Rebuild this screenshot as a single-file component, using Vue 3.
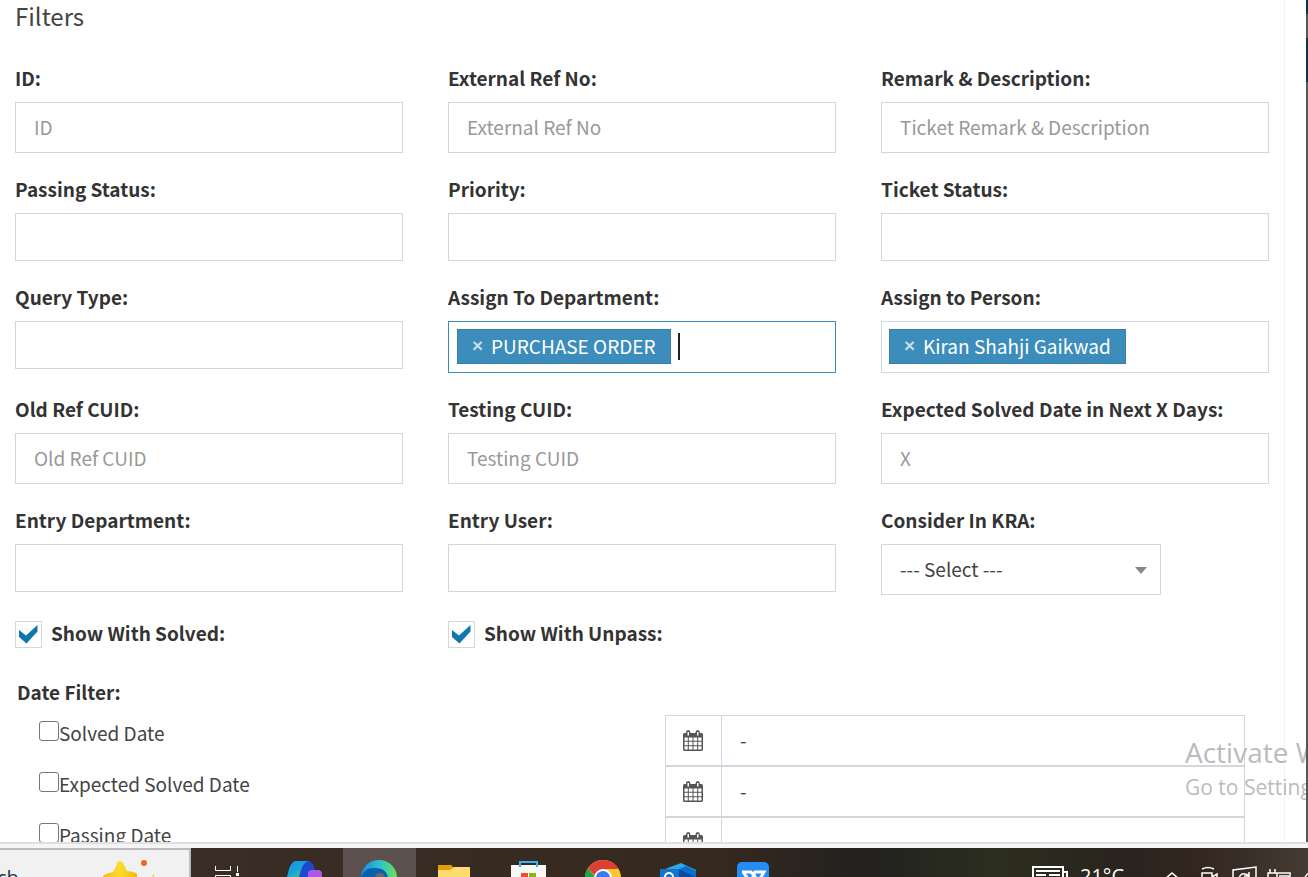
<script setup>
import { ref } from 'vue'

const rows = [
  [
    { id: 'id', label: 'ID:', type: 'text', placeholder: 'ID' },
    { id: 'external', label: 'External Ref No:', type: 'text', placeholder: 'External Ref No' },
    { id: 'remark', label: 'Remark & Description:', type: 'text', placeholder: 'Ticket Remark & Description' }
  ],
  [
    { id: 'passing', label: 'Passing Status:', type: 'tags' },
    { id: 'priority', label: 'Priority:', type: 'tags' },
    { id: 'ticket', label: 'Ticket Status:', type: 'tags' }
  ],
  [
    { id: 'query', label: 'Query Type:', type: 'tags' },
    { id: 'department', label: 'Assign To Department:', type: 'tags', tag: 'PURCHASE ORDER', active: true },
    { id: 'person', label: 'Assign to Person:', type: 'tags', tag: 'Kiran Shahji Gaikwad' }
  ],
  [
    { id: 'oldref', label: 'Old Ref CUID:', type: 'text', placeholder: 'Old Ref CUID' },
    { id: 'testing', label: 'Testing CUID:', type: 'text', placeholder: 'Testing CUID' },
    { id: 'expected', label: 'Expected Solved Date in Next X Days:', type: 'text', placeholder: 'X' }
  ],
  [
    { id: 'entrydept', label: 'Entry Department:', type: 'tags' },
    { id: 'entryuser', label: 'Entry User:', type: 'tags' },
    { id: 'kra', label: 'Consider In KRA:', type: 'select' }
  ]
]

const showSolved = ref(true)
const showUnpass = ref(true)
const dates = ref([
  { id: 'solved-date', label: 'Solved Date', range: '-' },
  { id: 'expected-date', label: 'Expected Solved Date', range: '-' },
  { id: 'passing-date', label: 'Passing Date', range: '-' }
])
</script>

<template>
  <div class="screen">
    <main class="page">
      <form class="filters" @submit.prevent>
        <h1>Filters</h1>
        <div v-for="(row, i) in rows" :key="i" class="row">
          <div v-for="f in row" :key="f.id" class="field">
            <label :for="f.id">{{ f.label }}</label>
            <input v-if="f.type === 'text'" :id="f.id" class="box text" type="text" :placeholder="f.placeholder" />
            <div v-else-if="f.type === 'tags'" class="box tags" :class="{ active: f.active, filled: f.tag }">
              <span v-if="f.tag" class="tag"><button type="button" :aria-label="'Remove ' + f.tag">×</button>{{ f.tag }}</span>
              <i v-if="f.active" class="caret"></i>
              <input :id="f.id" type="text" />
            </div>
            <div v-else class="select">
              <select :id="f.id" class="box text"><option>--- Select ---</option></select>
              <i class="arrow"></i>
            </div>
          </div>
        </div>
        <div class="row checks">
          <label class="check"><input v-model="showSolved" type="checkbox" />
            <svg viewBox="0 0 27 27"><rect x=".5" y=".5" width="26" height="26" fill="#fff" stroke="#d6d8db" /><path v-if="showSolved" d="M4 9 11 14.500 22.500 4V10.500L11.500 22.500 4 16Z" fill="#1076ad" /></svg>
            <span>Show With Solved:</span></label>
          <label class="check"><input v-model="showUnpass" type="checkbox" />
            <svg viewBox="0 0 27 27"><rect x=".5" y=".5" width="26" height="26" fill="#fff" stroke="#d6d8db" /><path v-if="showUnpass" d="M4 9 11 14.500 22.500 4V10.500L11.500 22.500 4 16Z" fill="#1076ad" /></svg>
            <span>Show With Unpass:</span></label>
        </div>
        <h2>Date Filter:</h2>
        <div v-for="d in dates" :key="d.id" class="date-row">
          <label class="date-label"><input type="checkbox" /><span>{{ d.label }}</span></label>
          <div class="range">
            <span class="addon">
              <svg viewBox="0 0 20 22"><path fill="#555" fill-rule="evenodd" d="M1.500 3H3V2.500a2.200 2.500 0 0 1 4.400 0V3H12.500V2.500a2.200 2.500 0 0 1 4.400 0V3H18.500Q20 3 20 4.500V19.500Q20 21 18.500 21H1.500Q0 21 0 19.500V4.500Q0 3 1.500 3ZM4.500 2V5.500H6V2ZM14 2V5.500H15.500V2ZM1.500 7.500V10.800H4.800V7.500ZM5.800 7.500V10.800H9.500V7.500ZM10.500 7.500V10.800H14.200V7.500ZM15.200 7.500V10.800H18.500V7.500ZM1.500 11.800V15.200H4.800V11.800ZM5.800 11.800V15.200H9.500V11.800ZM10.500 11.800V15.200H14.200V11.800ZM15.200 11.800V15.200H18.500V11.800ZM1.500 16.200V19.500H4.800V16.200ZM5.800 16.200V19.500H9.500V16.200ZM10.500 16.200V19.500H14.200V16.200ZM15.200 16.200V19.500H18.500V16.200Z" /></svg>
            </span>
            <input v-model="d.range" class="box text" type="text" :aria-label="d.label + ' range'" />
          </div>
        </div>
      </form>
      <div class="edge"></div>
    </main>
    <div class="watermark"><p class="big">Activate Windows</p><p>Go to Settings</p></div>
    <div class="window-edge"></div>
    <footer class="taskbar">
      <div class="search"><span>ch</span>
        <svg class="star" viewBox="0 0 56 28"><defs><linearGradient id="star" x1="0" x2="1"><stop stop-color="#fbb51a" /><stop offset=".5" stop-color="#ffdc2c" /><stop offset="1" stop-color="#f5b50c" /></linearGradient></defs><path fill="url(#star)" d="M1 16Q3 14 11 12Q13 10 15 3Q18-1 21 3L25 11Q33 12 35 14Q36 17 32 20L28 28H8L6 22Q0 18 1 16Z" /><circle cx="42" cy="3" r="3" fill="#f26322" /><path fill="#f8cf35" d="M51 14 53 18 55 20V28H48V22L50 18Z" /></svg>
      </div>
      <div class="apps">
        <div class="app"><svg viewBox="0 0 73 29" fill="none" stroke="#fff"><path d="M24.500 18V22.500H39.500V18M24.500 30V27.500H39.500V30M46.500 18V24" /><path d="M45 26.500H48" stroke-width="3" /></svg></div>
        <div class="app"><svg viewBox="0 0 73 29"><defs><linearGradient id="cp" y1="0" y2="1"><stop stop-color="#168ee8" /><stop offset=".5" stop-color="#17a4dd" /><stop offset="1" stop-color="#71c84c" /></linearGradient></defs><path fill="#1b49d0" d="M34 13H45Q49 14 51 22L45 29H34Z" /><path fill="url(#cp)" d="M31 13H44Q39 15 37 22L35 29H23Q26 14 31 13Z" /><rect x="44" y="22" width="14" height="15" rx="4" fill="#ad58e5" /></svg></div>
        <div class="app active-app"><svg viewBox="0 0 73 29"><defs><linearGradient id="eg"><stop stop-color="#168ed4" /><stop offset=".5" stop-color="#2abfd4" /><stop offset="1" stop-color="#68e35a" /></linearGradient></defs><circle cx="36" cy="30" r="18" fill="url(#eg)" /><path fill="#0b60ae" d="M18 29Q22 19 32 20Q43 20 45 29Z" /><circle cx="37" cy="30" r="5" fill="#71646a" /></svg></div>
        <div class="app"><svg viewBox="0 0 73 29"><path fill="#e2a000" d="M16 17H29L32 20V29H16Z" /><path fill="#ffdb70" d="M16 22H28L32 19H48V29H16Z" /></svg></div>
        <div class="app"><svg viewBox="0 0 73 29"><path fill="#f8f8f8" d="M16 17H51V29H16Z" /><path fill="none" stroke="#31b4ef" stroke-width="2" d="M25 19V14H42V19" /><path fill="#ef5128" d="M26 25H33V29H26Z" /><path fill="#83b80d" d="M34 25H41V29H34Z" /></svg></div>
        <div class="app"><svg viewBox="0 0 73 29"><circle cx="35" cy="30" r="18" fill="#fdc82f" /><path fill="#dd4034" d="M20 20Q25 12 35 12T51 21H35L28 29Z" /><path fill="#2d9f4c" d="M17 29Q17 25 20 20L27 29Z" /><circle cx="35" cy="30" r="9" fill="#fff" /><circle cx="35" cy="30" r="7" fill="#3a7bec" /></svg></div>
        <div class="app"><svg viewBox="0 0 73 29"><path fill="#28a8e8" d="M24 21 40 15 55 22V29H32Z" /><path fill="#0870cf" d="M34 23 45 18 55 23V29H34Z" /><path fill="#0d4a9b" d="M38 21 46 25 55 29H38Z" /><rect x="19" y="21" width="19" height="14" fill="#1274ca" /><circle cx="28" cy="29" r="4" fill="none" stroke="#fff" stroke-width="2" /></svg></div>
        <div class="app"><svg viewBox="0 0 73 29"><rect x="23" y="14" width="32" height="32" rx="5" fill="#258cf4" /><path fill="none" stroke="#fff" stroke-width="3" d="M28 24H37L43 31M29 24 34 31M38 31 41 24H50L46 31" /></svg></div>
      </div>
      <div class="tray">
        <svg class="news" viewBox="0 0 38 29"><path fill="none" stroke="#fff" stroke-width="2" d="M2 30V19H32V30M32 24H36V30M5 23H29M5 27H15M18 27H29" /></svg>
        <span class="temp">21°C</span>
        <svg class="icons" viewBox="0 0 157 29" fill="none" stroke="#fff" stroke-width="1.500"><path d="M14 31 21 25 28 31M51 21Q57 18 63 21M51 31V25H61V31M61 29 66 26V31M82 31V22L105 19V31M88 31Q89 25 94 26Q97 26 98 29M98 24V28H93M119 21V25M124 21V25M117 31V25H126V31M126 25H139V31M128 28H138M154 31Q154 27 158 25" /></svg>
      </div>
    </footer>
  </div>
</template>

<style>
html, body { margin: 0; }
</style>

<style scoped>
* { box-sizing: border-box; }
.screen {
  position: relative;
  display: flex;
  flex-direction: column;
  height: 100vh;
  overflow: hidden;
  background: #fff;
  color: #444;
  font-family: "Noto Sans CJK SC", "Noto Sans", sans-serif;
  font-size: 19px;
  line-height: 28px;
}
.page { position: relative; flex: 1; min-height: 0; overflow: hidden; }
.filters { padding: 0 39px 0 15px; }
h1 { margin: 0 0 32px; font-size: 24px; font-weight: 400; line-height: 32px; }
.row { display: grid; grid-template-columns: repeat(3, 1fr); gap: 45px; margin-bottom: 22px; align-items: start; }
.field { display: flex; flex-direction: column; gap: 10px; min-width: 0; }
.field > label, .check, h2 { color: #333; font-weight: 700; }
input, select, button { font: inherit; color: inherit; }
.box { width: 100%; border: 1px solid #d2d6de; border-radius: 0; background: #fff; outline: 0; }
.text { height: 51px; padding: 0 18px 2px; }
.text::placeholder { color: #999; opacity: 1; }
.tags { display: flex; align-items: center; height: 48px; padding: 0 8px; }
.tags.filled { height: 52px; padding: 0 7px 2px; }
.tags.active { padding: 0 8px 2px; border-color: #3c8dbc; }
.tags input { flex: 1; min-width: 0; border: 0; padding: 0; outline: 0; background: transparent; }
.tag { display: flex; align-items: center; height: 35px; padding: 0 14px; border: 1px solid #367fa9; background: #3c8dbc; color: #fff; white-space: nowrap; }
.tag button { width: 19px; padding: 0; border: 0; background: none; color: #c4dded; font-family: "Liberation Sans", sans-serif; font-weight: 700; text-align: left; line-height: 28px; }
.caret { width: 2px; height: 27px; margin: 0 7px; background: #222; }
.select { position: relative; width: 280px; }
.select select { appearance: none; }
.arrow { position: absolute; right: 14px; top: 23px; border: 6px solid transparent; border-top: 7px solid #888; border-bottom: 0; pointer-events: none; }
.checks { margin: 26px 0 30px; }
.row:has(+ .checks) { margin-bottom: 0; }
.check { position: relative; display: flex; align-items: flex-end; gap: 9px; height: 27px; }
.check input { position: absolute; width: 27px; height: 27px; margin: 0; opacity: 0; }
.check svg { width: 27px; height: 27px; }
.check span { line-height: 30px; }
h2 { margin: 0 0 9px 2px; font-size: 19px; }
.date-row { display: grid; grid-template-columns: 650fr 580fr; margin-right: 24px; }
.date-label { display: flex; align-items: flex-start; padding: 4px 0 0 24px; }
.date-label input { appearance: none; width: 20px; height: 20px; margin: 2px 0 0; border: 1px solid #767676; border-radius: 3px; background: #fff; }
.date-label:has(:checked) input { background: #1076ad; }
.range { display: flex; }
.addon { display: flex; flex: none; align-items: center; justify-content: center; width: 56px; padding-right: 1px; border: 1px solid #d2d6de; border-right: 0; }
.addon svg { width: 20px; height: 22px; }
.edge { position: absolute; inset: 0 23px 0 auto; width: 1px; background: #f3f4f5; }
.window-edge { position: absolute; inset: 0 0 35px auto; width: 2px; background: linear-gradient(#12344a 14px, #555 14px 38px, #12344a 38px 82px, #555 82px); }
.watermark { position: absolute; top: 732px; left: calc(100% - 123px); color: #bbb; font-family: "Open Sans", sans-serif; font-size: 21px; line-height: 30px; white-space: nowrap; }
.watermark p { margin: 0; }
.watermark .big { font-size: 28px; line-height: 40px; }
.taskbar { display: flex; flex: none; height: 35px; border-top: 2px solid #e0e0e0; box-shadow: inset 0 4px #f5f5f5; padding-top: 4px; background: linear-gradient(90deg, #3a2d26 15%, #35291f 55%, #22211f 66%, #2c2e1f 76%, #29241e 86%, #332720 92%, #443b32); color: #fff; overflow: hidden; }
.search { position: relative; flex: none; width: 191px; border: solid #bbb; border-width: 2px 2px 0 0; background: #f1f1f1; color: #28344b; overflow: hidden; }
.search span { position: absolute; left: -3px; top: 16px; font-family: "Open Sans", sans-serif; font-size: 20px; line-height: 24px; }
.star { position: absolute; left: 102px; top: 10px; width: 56px; height: 28px; overflow: visible; }
.apps { display: flex; flex: none; }
.app { width: 73px; height: 29px; overflow: hidden; }
.app svg { display: block; width: 73px; height: 29px; }
.active-app { margin: 0 6px; background: #5c514e; }
.tray { display: flex; flex: none; height: 29px; margin-left: auto; overflow: hidden; }
.news { width: 38px; height: 29px; }
.temp { width: 82px; padding: 14px 0 0 11px; font-family: "Open Sans", sans-serif; font-size: 20px; }
.icons { width: 157px; height: 29px; }
</style>
